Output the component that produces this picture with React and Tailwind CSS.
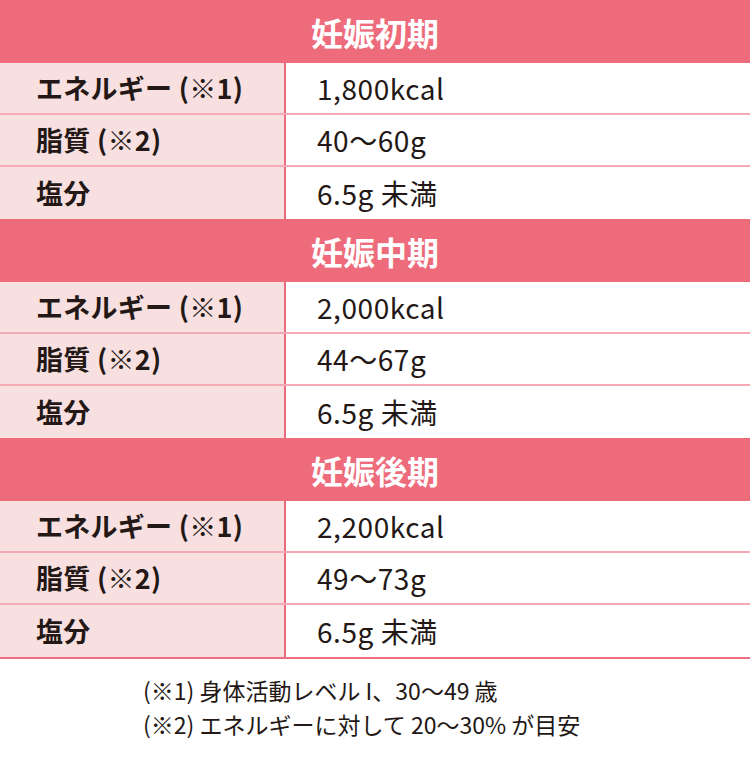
const sections = [
  { title: '妊娠初期', rows: ['1,800kcal', '40〜60g', '6.5g 未満'] },
  { title: '妊娠中期', rows: ['2,000kcal', '44〜67g', '6.5g 未満'] },
  { title: '妊娠後期', rows: ['2,200kcal', '49〜73g', '6.5g 未満'] },
]

const labels = ['エネルギー (※1)', '脂質 (※2)', '塩分']

function Row({ label, value, last }) {
  return (
    <div className={`flex h-[52px] ${last ? '' : 'border-b-2 border-[#f4a9b5]'}`}>
      <div className="w-[284px] shrink-0 bg-[#f8dfe0] flex items-center pl-[36px] font-bold text-[27px] tracking-[0.01em]">
        {label}
      </div>
      <div className="w-[2px] bg-[#ec6b7b]" />
      <div className="flex-1 flex items-center pl-[31px] text-[28px] tracking-[0.02em]">{value}</div>
    </div>
  )
}

export default function App() {
  return (
    <div
      className="w-[750px] h-[760px] bg-white text-[#231815]"
      style={{ fontFamily: '"Noto Sans CJK JP", "Noto Sans", sans-serif' }}
    >
      {sections.map(s => (
        <div key={s.title}>
          <div className="h-[63px] bg-[#ed6b7b] flex items-center justify-center text-white font-bold text-[32px]">
            {s.title}
          </div>
          {s.rows.map((v, i) => (
            <Row key={i} label={labels[i]} value={v} last={i === 2} />
          ))}
        </div>
      ))}
      <div className="h-[2px] bg-[#ec7080]" />
      <div className="pl-[143px] pt-[14px] text-[23px] leading-[34px]">
        <p>(※1) 身体活動レベル I、30〜49 歳</p>
        <p>(※2) エネルギーに対して 20〜30% が目安</p>
      </div>
    </div>
  )
}
